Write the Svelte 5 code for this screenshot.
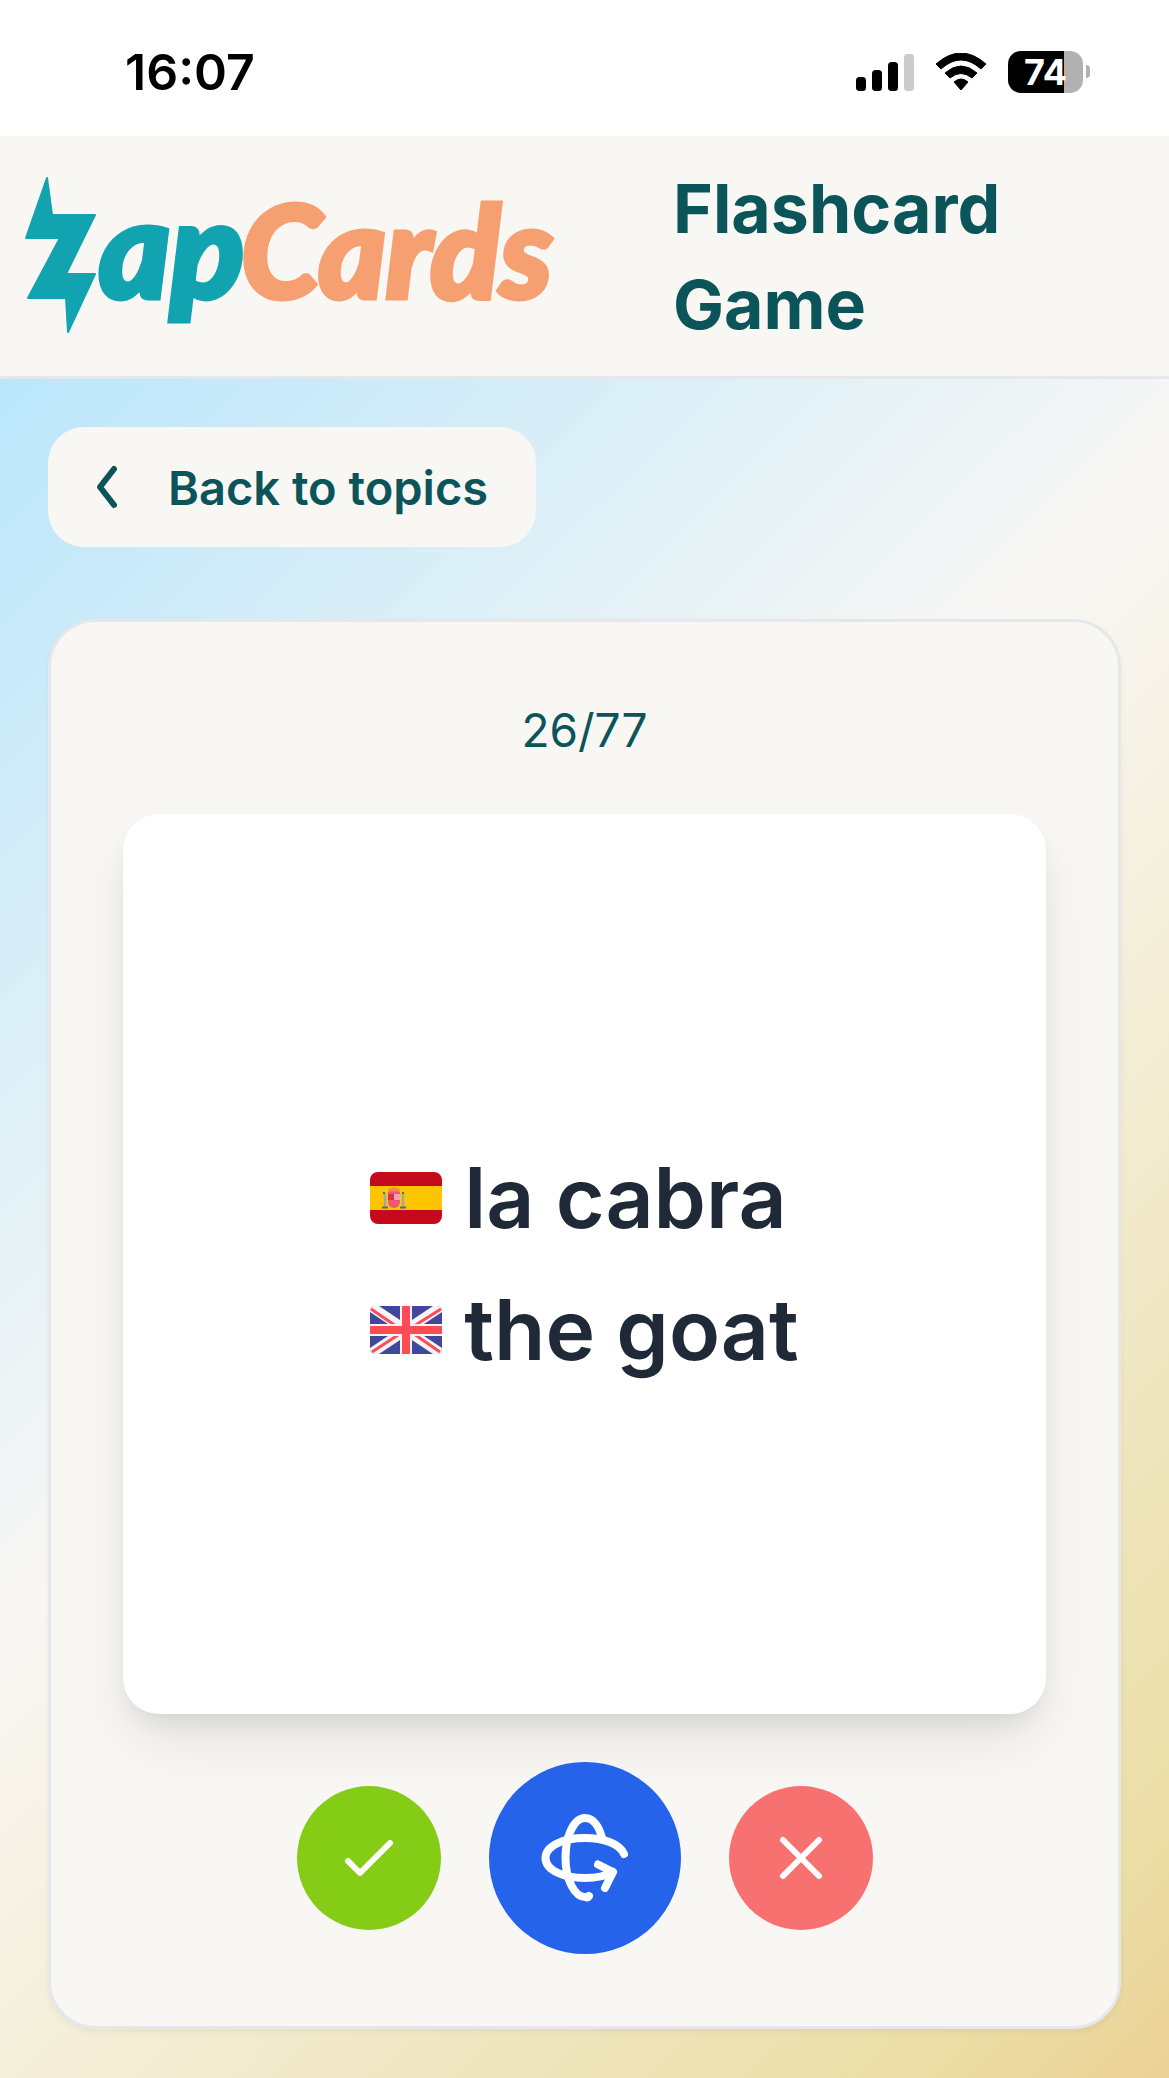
<script>
  let current = $state(26);
  const total = 77;
  const bars = [14, 21, 29, 37];
</script>

<div class="page">
  <div class="status">
    <span class="clock">16:07</span>
    <div class="indicators">
      <svg class="signal" viewBox="0 0 58 38" aria-hidden="true">
        {#each bars as h, i}
          <rect x={i * 16} y={38 - h} width="10" height={h} rx="3.5" fill={i === 3 ? '#cbcbcb' : '#000'} />
        {/each}
      </svg>
      <svg class="wifi" viewBox="0 0 50 38" aria-hidden="true">
        <path d="M0 11 Q25 -11 50 11 L45 16 Q25 -2 5 16 Z M9 20 Q25 6 41 20 L36 25 Q25 16 14 25 Z M18 29 Q25 23 32 29 L25 37 Z" stroke="#000" stroke-width="1" stroke-linejoin="round" />
      </svg>
      <div class="battery"><span class="level">74</span><i class="tip"></i></div>
    </div>
  </div>

  <header>
    <svg class="logo" viewBox="0 0 552 192" role="img" aria-label="ZapCards">
      <path class="bolt" d="M23 18 L28 55 H71 L42 114 H71 L44 172 L42 138 H4 L36 78 H2 Z" />
      <text class="mark zap" x="75" y="138">ap</text>
      <text class="mark cards" x="217" y="138">Cards</text>
    </svg>
    <h1>Flashcard Game</h1>
  </header>

  <main>
    <button class="back">
      <svg viewBox="0 0 24 48" aria-hidden="true"><path d="M18 6 L4 24 L18 42" /></svg>
      <span>Back to topics</span>
    </button>

    <section class="panel">
      <p class="count">{current}/{total}</p>
      <div class="card">
        <div class="words">
          <div class="word">
            <svg class="flag" viewBox="0 0 72 52" role="img" aria-label="Spanish">
              <clipPath id="es"><rect width="72" height="52" rx="8" /></clipPath>
              <g clip-path="url(#es)">
                <rect width="72" height="52" fill="#c60a1d" />
                <rect y="14" width="72" height="24" fill="#ffc400" />
                <path d="M15 21v14M33 21v14" stroke="#9aaab2" stroke-width="2.4" />
                <path d="M12 35.500h6M30 35.500h6M14 20v2M33 20v2" stroke="#596b78" stroke-width="2" />
                <path d="M18 20h12v10a6 6 0 0 1-12 0z" fill="#ea596e" />
                <rect x="18" y="22" width="6" height="6" fill="#e02f45" />
                <rect x="24" y="22" width="6" height="6" fill="#f4a2b2" />
                <path d="M18 17q6-3 12 0l-1 4H19z" fill="#f58a4b" />
                <path d="M19 20.500h10" stroke="#ea596e" stroke-width="2" />
              </g>
            </svg>
            <span>la cabra</span>
          </div>
          <div class="word">
            <svg class="flag" viewBox="0 0 72 48" role="img" aria-label="English">
              <clipPath id="gb"><rect width="72" height="48" rx="5" /></clipPath>
              <g clip-path="url(#gb)">
                <rect width="72" height="48" fill="#41479b" />
                <path d="M0 0L72 48M72 0L0 48" stroke="#f5f5f5" stroke-width="10" />
                <path d="M1 3L26 20M71 3L44 20M2 46L28 29M70 46L44 28" stroke="#ff4b55" stroke-width="3" />
                <path d="M36 0V48M0 24H72" stroke="#f5f5f5" stroke-width="12" />
                <path d="M36 0V48M0 24H72" stroke="#ff4b55" stroke-width="8" />
              </g>
            </svg>
            <span>the goat</span>
          </div>
        </div>
      </div>
      <div class="actions">
        <button class="round known" aria-label="I know it">
          <svg viewBox="0 0 72 72" aria-hidden="true"><path d="M15 39 L27 51 L57 21" /></svg>
        </button>
        <button class="round flip" aria-label="Flip card">
          <svg viewBox="0 0 96 96" aria-hidden="true">
            <path d="M65 28C62 16 56 8 48 8C37 8 28.500 26 28.500 48C28.500 70 38 87 48 87Q51 88 52 86" />
            <path d="M87 44C83 34 67 28 48 28C26 28 8.500 36 8.500 48C8.500 60 26 68 48 68Q65 68 76 62M61 54.500L76 62L68 78" />
          </svg>
        </button>
        <button class="round unknown" aria-label="I don't know it">
          <svg viewBox="0 0 72 72" aria-hidden="true"><path d="M18 18L54 54M54 18L18 54" /></svg>
        </button>
      </div>
    </section>
  </main>
</div>

<style>
  :global(body) {
    margin: 0;
  }
  .page {
    min-height: 100vh;
    display: flex;
    flex-direction: column;
    font-family: Inter, "Liberation Sans", sans-serif;
    color: #0a545a;
    background: #fff;
  }
  button {
    font: inherit;
    color: inherit;
    border: 0;
    cursor: pointer;
  }
  .status {
    height: 136px;
    box-sizing: border-box;
    padding: 8px 78px 0 125px;
    display: flex;
    align-items: center;
    justify-content: space-between;
    color: #000;
  }
  .clock {
    font-size: 50px;
    font-weight: 600;
  }
  .indicators {
    display: flex;
    align-items: center;
    gap: 22px;
  }
  .signal {
    width: 58px;
    height: 38px;
  }
  .wifi {
    width: 50px;
    height: 38px;
  }
  .battery {
    position: relative;
    width: 75px;
    height: 42px;
    margin-right: 8px;
    border-radius: 13px;
    background: linear-gradient(90deg, #000 75%, #b1b1b1 75%);
    display: flex;
    align-items: center;
    justify-content: center;
  }
  .level {
    color: #fff;
    font-size: 36px;
    font-weight: 700;
    line-height: 42px;
  }
  .tip {
    position: absolute;
    left: 78px;
    top: 14px;
    width: 4px;
    height: 13px;
    border-radius: 0 8px 8px 0;
    background: #b1b1b1;
  }
  header {
    display: grid;
    grid-template-columns: 552px 1fr;
    column-gap: 97px;
    align-items: center;
    padding: 24px;
    background: #f9f7f4;
    border-bottom: 3px solid #e5e7eb;
  }
  .logo {
    width: 552px;
    height: 192px;
    overflow: visible;
  }
  .bolt,
  .zap {
    fill: #12a3b1;
    stroke: #12a3b1;
  }
  .bolt {
    stroke-width: 2px;
    stroke-linejoin: round;
  }
  .mark {
    font-family: Lato, sans-serif;
    font-weight: 900;
    font-style: italic;
    stroke-width: 5px;
  }
  .zap {
    font-size: 136px;
  }
  .cards {
    font-size: 128px;
    fill: #f6a072;
    stroke: #f6a072;
  }
  h1 {
    margin: 0;
    max-width: 420px;
    font-size: 68px;
    line-height: 96px;
    font-weight: 700;
  }
  main {
    flex: 1;
    padding: 48px;
    background: linear-gradient(135deg, #bae6fb, #f9f7f4 44%, #eadda4 92%, #edd196);
  }
  .back {
    display: flex;
    align-items: center;
    gap: 48px;
    height: 120px;
    padding: 0 48px;
    margin-bottom: 72px;
    border-radius: 36px;
    background: #f9f7f4;
    font-size: 47px;
    font-weight: 600;
  }
  .back svg {
    width: 24px;
    height: 48px;
    fill: none;
    stroke: currentColor;
    stroke-width: 6;
    stroke-linecap: round;
    stroke-linejoin: round;
  }
  .panel {
    padding: 72px;
    border: 3px solid #e5e7eb;
    border-radius: 48px;
    background: #f9f7f4;
    box-shadow: 0 3px 6px rgba(0, 0, 0, 0.05);
  }
  .count {
    margin: 0 0 48px;
    text-align: center;
    font-size: 46px;
    line-height: 72px;
  }
  .card {
    height: 900px;
    display: flex;
    align-items: center;
    justify-content: center;
    border-radius: 36px;
    background: #fff;
    box-shadow: 0 30px 60px -9px rgba(0, 0, 0, 0.1), 0 12px 24px -9px rgba(0, 0, 0, 0.1);
    color: #1f2937;
  }
  .words {
    display: grid;
    gap: 12px;
  }
  .word {
    display: flex;
    align-items: center;
    gap: 22px;
    font-size: 84px;
    line-height: 120px;
    font-weight: 600;
  }
  .flag {
    width: 72px;
  }
  .actions {
    display: flex;
    align-items: center;
    justify-content: center;
    gap: 48px;
    margin-top: 48px;
  }
  .round {
    width: 144px;
    height: 144px;
    padding: 0;
    border-radius: 50%;
    display: grid;
    place-items: center;
    color: #fff;
  }
  .round svg {
    width: 72px;
    height: 72px;
    fill: none;
    stroke: currentColor;
    stroke-width: 6;
    stroke-linecap: round;
    stroke-linejoin: round;
  }
  .known {
    background: #84cc16;
  }
  .unknown {
    background: #f87171;
  }
  .flip {
    width: 192px;
    height: 192px;
    background: #2563eb;
  }
  .flip svg {
    width: 96px;
    height: 96px;
    stroke-width: 8;
  }
</style>
